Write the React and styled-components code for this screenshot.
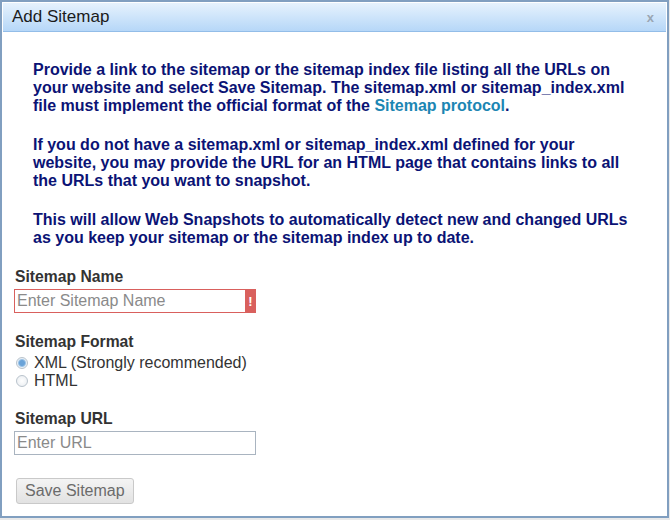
import React from "react";
import styled, { createGlobalStyle } from "styled-components";

const Global = createGlobalStyle`
  html, body { margin: 0; padding: 0; background: #e9e9e9; }
  body { font-family: "Liberation Sans", Arial, sans-serif; }
`;

const Dialog = styled.div`
  box-sizing: border-box;
  width: 669px;
  height: 518px;
  border: 2px solid #819fc0;
  background: #fff;
  padding: 1px;
  display: flex;
  flex-direction: column;
`;

const Header = styled.div`
  height: 28px;
  display: flex;
  align-items: center;
  justify-content: space-between;
  padding: 0 12px 0 9px;
  background: linear-gradient(#e6f2fd, #b6d7f8);
  border-bottom: 1px solid #93bde8;
`;

const Title = styled.span`
  font-size: 17px;
  color: #1b1b1b;
`;

const Close = styled.span`
  font-size: 13px;
  font-weight: bold;
  color: #9aa6b2;
`;

const Body = styled.div`
  padding: 29px 11px 0 11px;
  display: flex;
  flex-direction: column;
`;

const Intro = styled.div`
  width: 600px;
  padding-left: 19px;
  margin-bottom: 21px;
`;

const Para = styled.p`
  margin: 0 0 21px 0;
  font-size: 16px;
  font-weight: bold;
  line-height: 18px;
  color: #0b1375;
  &:last-child { margin-bottom: 0; }
`;

const Link = styled.a`
  color: #1c86b3;
  text-decoration: none;
`;

const Field = styled.div`
  display: flex;
  flex-direction: column;
  margin-bottom: 20px;
`;

const Label = styled.label`
  font-size: 15.7px;
  font-weight: bold;
  color: #333;
  line-height: 18px;
  margin-bottom: 3px;
  padding-left: 1px;
`;

const InputWrap = styled.div`
  position: relative;
  width: 242px;
`;

const Input = styled.input`
  box-sizing: border-box;
  width: 242px;
  height: 24px;
  border: 1px solid ${(p) => (p.$error ? "#d9605d" : "#a9b4c0")};
  padding: 0 2px;
  font-family: "Liberation Sans", Arial, sans-serif;
  font-size: 16px;
  color: #333;
  outline: none;
  &::placeholder { color: #8a8a8a; }
`;

const Badge = styled.span`
  position: absolute;
  right: 0;
  top: 0;
  width: 11px;
  height: 24px;
  background: #d9605d;
  color: #fff;
  font-weight: bold;
  font-size: 13px;
  display: flex;
  align-items: center;
  justify-content: center;
`;

const RadioRow = styled.label`
  display: flex;
  align-items: center;
  gap: 6px;
  font-size: 16px;
  color: #333;
  line-height: 18px;
  padding-left: 2px;
`;

const RadioDot = styled.span`
  box-sizing: border-box;
  width: 12px;
  height: 12px;
  border-radius: 50%;
  border: 1px solid #b9c3cc;
  background: radial-gradient(circle, ${(p) => (p.$checked ? "#6aa3d8 0 2.5px, #9cc3e6 3.5px, #e9f1f8 4.5px" : "#fff 0, #eef1f4 5px")});
`;

const Button = styled.button`
  align-self: flex-start;
  margin-left: 2px;
  margin-top: 3px;
  height: 26px;
  padding: 0 8px;
  border: 1px solid #c9c9c9;
  border-radius: 3px;
  background: linear-gradient(#f4f4f4, #e2e2e2);
  color: #6b6b6b;
  font-family: "Liberation Sans", Arial, sans-serif;
  font-size: 16px;
`;

export default function App() {
  return (
    <>
      <Global />
      <Dialog>
        <Header>
          <Title>Add Sitemap</Title>
          <Close>x</Close>
        </Header>
        <Body>
          <Intro>
            <Para>
              Provide a link to the sitemap or the sitemap index file listing all the URLs on
              your website and select Save Sitemap. The sitemap.xml or sitemap_index.xml
              file must implement the official format of the <Link href="#">Sitemap protocol</Link>.
            </Para>
            <Para>
              If you do not have a sitemap.xml or sitemap_index.xml defined for your
              website, you may provide the URL for an HTML page that contains links to all
              the URLs that you want to snapshot.
            </Para>
            <Para>
              This will allow Web Snapshots to automatically detect new and changed URLs
              as you keep your sitemap or the sitemap index up to date.
            </Para>
          </Intro>
          <Field>
            <Label>Sitemap Name</Label>
            <InputWrap>
              <Input $error placeholder="Enter Sitemap Name" />
              <Badge>!</Badge>
            </InputWrap>
          </Field>
          <Field>
            <Label>Sitemap Format</Label>
            <RadioRow><RadioDot $checked />XML (Strongly recommended)</RadioRow>
            <RadioRow><RadioDot />HTML</RadioRow>
          </Field>
          <Field>
            <Label>Sitemap URL</Label>
            <Input placeholder="Enter URL" />
          </Field>
          <Button>Save Sitemap</Button>
        </Body>
      </Dialog>
    </>
  );
}
